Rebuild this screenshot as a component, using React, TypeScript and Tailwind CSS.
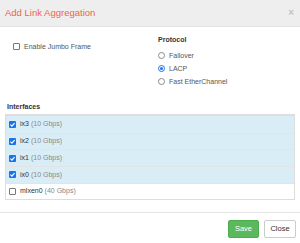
import { useState } from "react";

const interfaces = [
  { name: "ix3", speed: "10 Gbps", on: true },
  { name: "ix2", speed: "10 Gbps", on: true },
  { name: "ix1", speed: "10 Gbps", on: true },
  { name: "ix0", speed: "10 Gbps", on: true },
  { name: "mlxen0", speed: "40 Gbps", on: false },
];

const protocols = ["Failover", "LACP", "Fast EtherChannel"];

function Check({ on }: { on: boolean }) {
  if (!on)
    return <span className="w-[7px] h-[7px] shrink-0 rounded-[1px] border border-[#767676] bg-white" />;
  return (
    <span className="w-[7px] h-[7px] shrink-0 rounded-[1px] bg-[#1a73e8] flex items-center justify-center">
      <svg viewBox="0 0 8 8" className="w-[7px] h-[7px]">
        <path d="M1.6 4.2 L3.3 5.8 L6.4 2.3" fill="none" stroke="white" strokeWidth="1.3" />
      </svg>
    </span>
  );
}

function Radio({ on }: { on: boolean }) {
  if (!on)
    return <span className="w-[7px] h-[7px] shrink-0 rounded-full border border-[#8a8a8a] bg-white" />;
  return (
    <span className="w-[7px] h-[7px] shrink-0 rounded-full border border-[#1a73e8] bg-white flex items-center justify-center">
      <span className="w-[3px] h-[3px] rounded-full bg-[#1a73e8]" />
    </span>
  );
}

export default function App() {
  const [proto, setProto] = useState("LACP");
  const [jumbo, setJumbo] = useState(false);

  return (
    <div
      className="w-[300px] h-[243px] bg-white flex flex-col text-[#333] overflow-hidden"
      style={{ fontFamily: '"Liberation Sans", Arial, sans-serif' }}
    >
      {/* header */}
      <div className="h-[27px] shrink-0 bg-[#eeeeee] border-b border-[#e2e2e2] flex items-center justify-between pl-[5px] pr-[6px]">
        <span className="text-[9.5px] text-[#f0624b]">Add Link Aggregation</span>
        <span className="text-[10px] font-bold leading-none text-[#c4c4c4]">×</span>
      </div>

      {/* body */}
      <div className="flex-1 px-[5px]">
        <div className="flex">
          <div className="w-[152px] pl-[8px] pt-[15px]">
            <div
              onClick={() => setJumbo(!jumbo)}
              className="flex items-center gap-[4px] text-[7px] leading-[9px] text-[#555] cursor-pointer"
            >
              <Check on={jumbo} />
              Enable Jumbo Frame
            </div>
          </div>
          <div className="pt-[8px] pl-[1px]">
            <div className="text-[7px] font-bold leading-[9px] text-[#333]">Protocol</div>
            <div className="mt-[7px] flex flex-col gap-[4px]">
              {protocols.map((p) => (
                <div
                  key={p}
                  onClick={() => setProto(p)}
                  className="flex items-center gap-[4px] text-[7px] leading-[9px] text-[#555] cursor-pointer"
                >
                  <Radio on={proto === p} />
                  {p}
                </div>
              ))}
            </div>
          </div>
        </div>

        <div className="mt-[16px] pl-[2px] text-[7px] font-bold leading-[9px] text-[#333]">Interfaces</div>
        <div className="mt-[3px] border-t-2 border-[#dddddd] border-x border-b">
          {interfaces.map((it, i) => (
            <div
              key={it.name}
              className={
                "h-[16.7px] flex items-center gap-[4px] pl-[3px] text-[7px] " +
                (i > 0 ? "border-t border-[#e4e4e4] " : "") +
                (it.on ? "bg-[#d9edf7]" : "bg-white")
              }
            >
              <Check on={it.on} />
              <span className="text-[#333]">{it.name}</span>
              <span className="text-[#888] -ml-[2px]">({it.speed})</span>
            </div>
          ))}
        </div>
      </div>

      {/* footer */}
      <div className="h-[31px] shrink-0 border-t border-[#e5e5e5] flex items-start justify-end gap-[5px] pr-[4px] pt-[7px]">
        <button className="w-[31px] h-[18px] rounded-[2px] bg-[#5cb85c] border border-[#4cae4c] text-white text-[7.5px]">
          Save
        </button>
        <button className="w-[32px] h-[18px] rounded-[2px] bg-white border border-[#cccccc] text-[#333] text-[7.5px]">
          Close
        </button>
      </div>
    </div>
  );
}
